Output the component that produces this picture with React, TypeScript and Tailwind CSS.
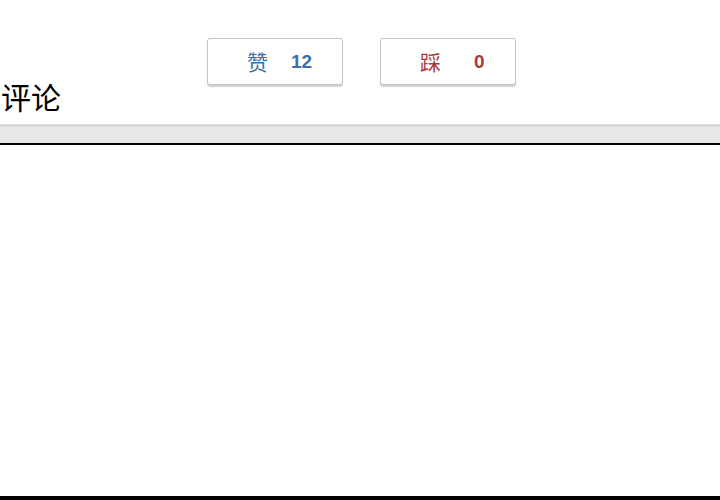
function VoteButton({ label, count, tone }: { label: string; count: number; tone: "up" | "down" }) {
  const color = tone === "up" ? "text-[#3b6fa8]" : "text-[#a8393a]";
  const gap = tone === "up" ? "gap-[23px]" : "gap-[33px]";
  return (
    <button
      className={`flex h-[47px] w-[136px] items-center rounded-[3px] border border-[#c4c4c4] bg-white pl-[39px] shadow-[0_2px_1px_rgba(0,0,0,0.18)] ${gap} ${color}`}
    >
      <span className="text-[21px] leading-none font-['Noto_Sans_CJK_SC',sans-serif]">{label}</span>
      <span className="text-[19px] leading-none font-semibold font-['Liberation_Sans',sans-serif]">{count}</span>
    </button>
  );
}

export default function App() {
  return (
    <div className="flex h-[500px] w-[720px] flex-col bg-white font-['Noto_Sans_CJK_SC',sans-serif]">
      <div className="flex justify-center gap-[37px] pt-[38px] pl-[3px]">
        <VoteButton label="赞" count={12} tone="up" />
        <VoteButton label="踩" count={0} tone="down" />
      </div>
      <h2 className="-mt-[9px] pl-[1px] text-[30px] leading-[40px] text-black">评论</h2>
      <div className="mt-[8px] h-[21px] border-t-[3px] border-b-2 border-t-[#d8d8d8] border-b-black bg-[#e8e8e8]" />
      <div className="flex-1" />
      <div className="h-[4px] bg-black" />
    </div>
  );
}
